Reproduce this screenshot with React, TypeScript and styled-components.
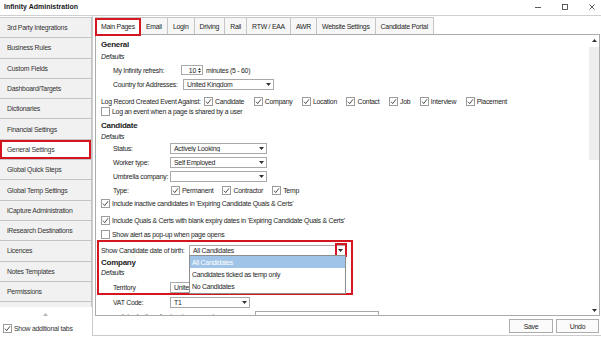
import React from "react";
import styled, { createGlobalStyle, css } from "styled-components";

const RED = "#d5161f";
const TEXT = "#1e1e1e";

const GlobalStyle = createGlobalStyle`
  * { box-sizing: border-box; }
  html, body { margin: 0; padding: 0; background: #fff; }
  body {
    font-family: "Liberation Sans", Arial, sans-serif;
    font-size: 6.9px;
    letter-spacing: -0.25px;
    color: ${TEXT};
  }
  #root { width: 601px; height: 337px; overflow: hidden; }
`;

const Window = styled.div`
  width: 601px;
  height: 337px;
  display: flex;
  flex-direction: column;
  background: #fff;
  overflow: hidden;
`;

const TitleBar = styled.header`
  flex: 0 0 16px;
  display: flex;
  align-items: center;
  justify-content: space-between;
  padding: 0 6px 2px 4px;
  border-bottom: 1px solid #cfcfcf;
`;

const Title = styled.h1`
  margin: 0;
  font-size: 7px;
  font-weight: 700;
  letter-spacing: 0;
  color: #1a1a1a;
`;

const Controls = styled.div`
  display: flex;
  align-items: center;
  gap: 21px;
`;

const Body = styled.div`
  flex: 1;
  display: flex;
  min-height: 0;
`;

/* ---------- Sidebar ---------- */

const Sidebar = styled.nav`
  flex: 0 0 92px;
  display: flex;
  flex-direction: column;
`;

const NavList = styled.div`
  flex: 0 0 290px;
  margin-top: 1px;
  overflow: hidden;
  display: flex;
  flex-direction: column;
  border-top: 1px solid #c9c9c9;
`;

const NavItem = styled.div<{ $active?: boolean }>`
  flex: 0 0 20.3px;
  display: flex;
  align-items: center;
  padding-left: 7px;
  background: #f1f1f1;
  border-bottom: 1px solid #c4c4c4;
  border-right: 1px solid #c4c4c4;
  color: #333;
  white-space: nowrap;
  ${(p) =>
    p.$active &&
    css`
      background: #fff;
      box-shadow: inset 0 0 0 2px ${RED};
    `}
`;

const ScrollHint = styled.div`
  flex: 0 0 15px;
  display: flex;
  align-items: center;
  justify-content: center;
  padding-right: 2px;
`;

const SideFooter = styled.label`
  flex: 0 0 13px;
  display: flex;
  align-items: center;
  gap: 2px;
  padding-left: 3px;
  color: #333;
`;

/* ---------- Main ---------- */

const Main = styled.main`
  flex: 1;
  display: flex;
  flex-direction: column;
  min-width: 0;
  border-left: 1px solid #cbcbcb;
  border-bottom: 1px solid #cbcbcb;
  margin-bottom: 1px;
  padding: 0 1px 0 2px;
`;

const TabStrip = styled.div`
  flex: 0 0 18px;
  display: flex;
  align-items: flex-end;
  padding-top: 1px;
`;

const Tab = styled.div<{ $active?: boolean }>`
  position: relative;
  height: 17px;
  display: flex;
  align-items: center;
  padding: 0 5px;
  border: 1px solid #c6c6c6;
  border-bottom: none;
  margin-left: -1px;
  background: #f6f6f6;
  white-space: nowrap;
  &:first-child {
    margin-left: 0;
  }
  ${(p) =>
    p.$active &&
    css`
      background: #fff;
      z-index: 2;
      &::after {
        content: "";
        position: absolute;
        left: -1px;
        right: -1px;
        top: 0;
        bottom: -2px;
        border: 2px solid ${RED};
      }
    `}
`;

const Panel = styled.section`
  flex: 1;
  min-height: 0;
  display: flex;
  border: 1px solid #ababab;
  background: #fff;
  overflow: hidden;
`;

const Content = styled.div`
  flex: 1;
  min-width: 0;
  display: flex;
  flex-direction: column;
  padding: 5px 0 0 5px;
  overflow: hidden;
`;

const Scrollbar = styled.div`
  flex: 0 0 10px;
  display: flex;
  flex-direction: column;
`;

const ScrollArrow = styled.div`
  flex: 0 0 10px;
  display: flex;
  align-items: center;
  justify-content: center;
`;

const ScrollTrack = styled.div`
  flex: 1;
  display: flex;
  flex-direction: column;
  padding-top: 2px;
`;

const ScrollThumb = styled.div`
  background: #ededed;
`;

const ButtonBar = styled.div`
  flex: 0 0 19px;
  display: flex;
  justify-content: flex-end;
  align-items: flex-start;
  gap: 3px;
  padding: 3px 1px 0 0;
`;

const Button = styled.button<{ $w: number }>`
  width: ${(p) => p.$w}px;
  height: 14px;
  padding: 0;
  border: 1px solid #acacac;
  background: #fbfbfb;
  font: inherit;
  color: ${TEXT};
  letter-spacing: inherit;
`;

/* ---------- Form rows ---------- */

const Row = styled.div<{ $mt?: number; $indent?: boolean }>`
  flex: 0 0 10px;
  height: 10px;
  display: flex;
  align-items: center;
  margin-top: ${(p) => p.$mt ?? 0}px;
  padding-left: ${(p) => (p.$indent ? 12 : 0)}px;
  white-space: nowrap;
`;

const Heading = styled.div<{ $mt?: number }>`
  flex: 0 0 10px;
  height: 10px;
  line-height: 10px;
  margin-top: ${(p) => p.$mt ?? 0}px;
  font-size: 8px;
  font-weight: 700;
  color: #1c1c1c;
`;

const SubHeading = styled.div<{ $mt?: number }>`
  flex: 0 0 10px;
  height: 10px;
  line-height: 10px;
  margin-top: ${(p) => p.$mt ?? 0}px;
  font-style: italic;
`;

const Label = styled.span<{ $w?: number }>`
  flex: 0 0 ${(p) => (p.$w ? `${p.$w}px` : "auto")};
  white-space: nowrap;
`;

const SelectBox = styled.div<{ $w: number }>`
  position: relative;
  flex: 0 0 ${(p) => p.$w}px;
  height: 11px;
  display: flex;
  align-items: center;
  border: 1px solid #a9a9a9;
  background: #fff;
  padding-left: 3px;
`;

const SelectValue = styled.span`
  flex: 1;
  overflow: hidden;
  white-space: nowrap;
`;

const DropButton = styled.span<{ $marked?: boolean }>`
  position: relative;
  flex: 0 0 9px;
  align-self: stretch;
  display: flex;
  align-items: center;
  justify-content: center;
  ${(p) =>
    p.$marked &&
    css`
      &::after {
        content: "";
        position: absolute;
        left: -1px;
        right: -2px;
        top: -3px;
        bottom: -2px;
        border: 2px solid ${RED};
      }
    `}
`;

const Spinner = styled.div`
  flex: 0 0 22px;
  height: 10px;
  display: flex;
  align-items: center;
  justify-content: flex-end;
  border: 1px solid #a9a9a9;
  padding-right: 1px;
  gap: 2px;
`;

const SpinArrows = styled.span`
  display: flex;
  flex-direction: column;
  gap: 1px;
`;

const Hint = styled.span`
  margin-left: 3px;
`;

const CheckGroup = styled.div<{ $gap: number }>`
  display: flex;
  align-items: center;
  gap: ${(p) => p.$gap}px;
`;

const CheckItem = styled.label`
  display: flex;
  align-items: center;
  gap: 2px;
  white-space: nowrap;
`;

const Box = styled.span`
  flex: 0 0 9px;
  width: 9px;
  height: 9px;
  border: 1px solid #9c9c9c;
  background: #fff;
  display: flex;
  align-items: center;
  justify-content: center;
`;

const Highlight = styled.div<{ $mt: number }>`
  position: relative;
  display: flex;
  flex-direction: column;
  margin-top: ${(p) => p.$mt}px;
  &::after {
    content: "";
    position: absolute;
    left: -4px;
    top: -6px;
    bottom: -3px;
    width: 252px;
    border: 2px solid ${RED};
    pointer-events: none;
    z-index: 3;
  }
`;

const DropList = styled.ul`
  position: absolute;
  top: 100%;
  left: -1px;
  right: -1px;
  margin: 0;
  padding: 0 0 1px;
  list-style: none;
  border: 1px solid #8e8e8e;
  background: #fff;
  z-index: 4;
`;

const DropOption = styled.li<{ $selected?: boolean }>`
  height: 12px;
  display: flex;
  align-items: center;
  padding-left: 2px;
  ${(p) =>
    p.$selected &&
    css`
      background: #9fc4e8;
      color: #fff;
    `}
`;

const ClippedText = styled.span`
  flex: 0 0 133px;
  color: #444;
`;

const TextField = styled.span<{ $w: number }>`
  flex: 0 0 ${(p) => p.$w}px;
  height: 11px;
  border: 1px solid #a9a9a9;
`;

/* ---------- Icons ---------- */

const Caret = () => (
  <svg width="5" height="3" viewBox="0 0 5 3">
    <path d="M0 0 H5 L2.5 3 Z" fill="#333" />
  </svg>
);

const Up = ({ c = "#333" }: { c?: string }) => (
  <svg width="5" height="3" viewBox="0 0 5 3">
    <path d="M0 3 H5 L2.5 0 Z" fill={c} />
  </svg>
);

const Check = ({ checked }: { checked?: boolean }) => (
  <Box>
    {checked && (
      <svg width="7" height="7" viewBox="0 0 7 7">
        <path d="M1 3.7 L2.7 5.6 L6 1.3" fill="none" stroke="#3a3a3a" strokeWidth="0.9" />
      </svg>
    )}
  </Box>
);

const CheckOption = ({ label, checked = true }: { label: string; checked?: boolean }) => (
  <CheckItem>
    <Check checked={checked} />
    {label}
  </CheckItem>
);

const Select = ({
  w,
  value,
  marked,
  children,
}: {
  w: number;
  value?: string;
  marked?: boolean;
  children?: React.ReactNode;
}) => (
  <SelectBox $w={w}>
    <SelectValue>{value}</SelectValue>
    <DropButton $marked={marked}>
      <Caret />
    </DropButton>
    {children}
  </SelectBox>
);

const navItems = [
  "3rd Party Integrations",
  "Business Rules",
  "Custom Fields",
  "Dashboard/Targets",
  "Dictionaries",
  "Financial Settings",
  "General Settings",
  "Global Quick Steps",
  "Global Temp Settings",
  "iCapture Administration",
  "iResearch Destinations",
  "Licences",
  "Notes Templates",
  "Permissions",
  "",
];

const tabs = [
  "Main Pages",
  "Email",
  "Login",
  "Driving",
  "Rail",
  "RTW / EAA",
  "AWR",
  "Website Settings",
  "Candidate Portal",
];

export default function App() {
  return (
    <>
      <GlobalStyle />
      <Window>
        <TitleBar>
          <Title>Infinity Administration</Title>
          <Controls>
            <svg width="6" height="6" viewBox="0 0 6 6">
              <path d="M0 3.5 H6" stroke="#333" strokeWidth="0.8" />
            </svg>
            <svg width="6" height="6" viewBox="0 0 6 6">
              <rect x="0.5" y="0.5" width="5" height="5" fill="none" stroke="#333" strokeWidth="0.8" />
            </svg>
            <svg width="6" height="6" viewBox="0 0 6 6">
              <path d="M0.5 0.5 L5.5 5.5 M5.5 0.5 L0.5 5.5" stroke="#333" strokeWidth="0.8" />
            </svg>
          </Controls>
        </TitleBar>
        <Body>
          <Sidebar>
            <NavList>
              {navItems.map((n, i) => (
                <NavItem key={i} $active={n === "General Settings"}>
                  {n}
                </NavItem>
              ))}
            </NavList>
            <ScrollHint>
              <Up c="#b5b5b5" />
            </ScrollHint>
            <SideFooter>
              <Check checked />
              Show additional tabs
            </SideFooter>
          </Sidebar>
          <Main>
            <TabStrip>
              {tabs.map((t) => (
                <Tab key={t} $active={t === "Main Pages"}>
                  {t}
                </Tab>
              ))}
            </TabStrip>
            <Panel>
              <Content>
                <Heading>General</Heading>
                <SubHeading $mt={2}>Defaults</SubHeading>
                <Row $mt={3} $indent>
                  <Label $w={68}>My Infinity refresh:</Label>
                  <Spinner>
                    10
                    <SpinArrows>
                      <svg width="3" height="2" viewBox="0 0 3 2">
                        <path d="M0 2 H3 L1.5 0 Z" fill="#333" />
                      </svg>
                      <svg width="3" height="2" viewBox="0 0 3 2">
                        <path d="M0 0 H3 L1.5 2 Z" fill="#333" />
                      </svg>
                    </SpinArrows>
                  </Spinner>
                  <Hint>minutes (5 - 60)</Hint>
                </Row>
                <Row $mt={4} $indent>
                  <Label $w={70}>Country for Addresses:</Label>
                  <Select w={91} value="United Kingdom" />
                </Row>
                <Row $mt={7}>
                  <Label $w={103}>Log Record Created Event Against:</Label>
                  <CheckGroup $gap={9.5}>
                    <CheckOption label="Candidate" />
                    <CheckOption label="Company" />
                    <CheckOption label="Location" />
                    <CheckOption label="Contact" />
                    <CheckOption label="Job" />
                    <CheckOption label="Interview" />
                    <CheckOption label="Placement" />
                  </CheckGroup>
                </Row>
                <Row $mt={0.5}>
                  <CheckOption label="Log an event when a page is shared by a user" checked={false} />
                </Row>
                <Heading $mt={4.2}>Candidate</Heading>
                <SubHeading $mt={1.3}>Defaults</SubHeading>
                <Row $mt={2} $indent>
                  <Label $w={57}>Status:</Label>
                  <Select w={97} value="Actively Looking" />
                </Row>
                <Row $mt={4} $indent>
                  <Label $w={57}>Worker type:</Label>
                  <Select w={97} value="Self Employed" />
                </Row>
                <Row $mt={4} $indent>
                  <Label $w={57}>Umbrella company:</Label>
                  <Select w={97} value="" />
                </Row>
                <Row $mt={4} $indent>
                  <Label $w={58}>Type:</Label>
                  <CheckGroup $gap={9}>
                    <CheckOption label="Permanent" />
                    <CheckOption label="Contractor" />
                    <CheckOption label="Temp" />
                  </CheckGroup>
                </Row>
                <Row $mt={3}>
                  <CheckOption label="Include inactive candidates in 'Expiring Candidate Quals & Certs'" />
                </Row>
                <Row $mt={6.8}>
                  <CheckOption label="Include Quals & Certs with blank expiry dates in 'Expiring Candidate Quals & Certs'" />
                </Row>
                <Row $mt={4.2}>
                  <CheckOption label="Show alert as pop-up when page opens" checked={false} />
                </Row>
                <Highlight $mt={5.7}>
                  <Row>
                    <Label $w={88}>Show Candidate date of birth:</Label>
                    <Select w={157} value="All Candidates" marked>
                      <DropList>
                        <DropOption $selected>All Candidates</DropOption>
                        <DropOption>Candidates ticked as temp only</DropOption>
                        <DropOption>No Candidates</DropOption>
                      </DropList>
                    </Select>
                  </Row>
                  <Heading $mt={2}>Company</Heading>
                  <SubHeading $mt={0.3}>Defaults</SubHeading>
                  <Row $mt={4.3} $indent>
                    <Label $w={57}>Territory</Label>
                    <Select w={97} value="United Kingdom" />
                  </Row>
                </Highlight>
                <Row $mt={5.7} $indent>
                  <Label $w={57}>VAT Code:</Label>
                  <Select w={80} value="T1" />
                </Row>
                <Row $mt={3.7} $indent>
                  <Label $w={9} />
                  <ClippedText>Introductions fee invoice account:</ClippedText>
                  <TextField $w={124} />
                </Row>
              </Content>
              <Scrollbar>
                <ScrollArrow>
                  <Up />
                </ScrollArrow>
                <ScrollTrack>
                  <ScrollThumb style={{ height: 113 }} />
                </ScrollTrack>
                <ScrollArrow>
                  <Caret />
                </ScrollArrow>
              </Scrollbar>
            </Panel>
            <ButtonBar>
              <Button $w={44}>Save</Button>
              <Button $w={43}>Undo</Button>
            </ButtonBar>
          </Main>
        </Body>
      </Window>
    </>
  );
}
